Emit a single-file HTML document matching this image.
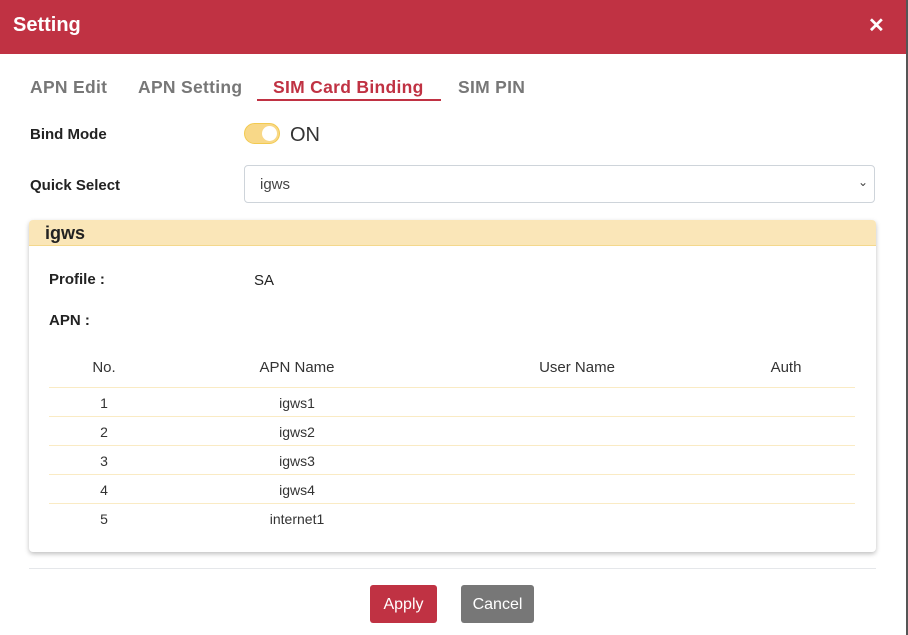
<!DOCTYPE html>
<html><head><style>
*{box-sizing:border-box;margin:0;padding:0}
body{width:908px;height:635px;background:#fff;font-family:"Liberation Sans",sans-serif;position:relative;overflow:hidden;color:#222}
.hdr{position:absolute;left:0;top:0;width:908px;height:54px;background:#c03243;color:#fff}
.hdr .t{position:absolute;left:13px;top:14px;font-size:20px;font-weight:bold}
.hdr .x{position:absolute;left:868px;top:13px;font-size:20px;font-weight:bold}
.tab{position:absolute;top:77px;font-size:17.5px;color:#777;font-weight:bold;letter-spacing:0.3px}
.lbl{position:absolute;left:30px;font-size:15px;font-weight:bold;color:#222}
.tog{position:absolute;left:244px;top:123px;width:36px;height:21px;border-radius:11px;background:#f8d888;border:1px solid #f2ca50}
.tog::after{content:"";position:absolute;right:2px;top:2px;width:15px;height:15px;border-radius:50%;background:#fff}
.sel{position:absolute;left:244px;top:165px;width:631px;height:38px;border:1px solid #ced4da;border-radius:4px;font-size:15px;color:#444;padding:10px 0 0 15px}
.card{position:absolute;left:29px;top:220px;width:847px;height:332px;border-radius:4px;box-shadow:0 2px 5px rgba(0,0,0,.25);background:#fff;overflow:hidden}
.ch{height:26px;background:#fae6b8;border-bottom:1px solid #f4d88c;font-size:18px;font-weight:bold;padding:3px 0 0 16px}
.c{position:absolute;font-size:14px;color:#333;transform:translateX(-50%);white-space:nowrap}
.ln{position:absolute;left:20px;width:806px;height:1px;background:#faebc4}
.btn{position:absolute;top:585px;height:38px;border-radius:3px;color:#fff;font-size:16px;text-align:center;padding-top:11px}
</style></head><body>
<div class="hdr"><div class="t">Setting</div><div class="x">✕</div></div>
<div class="tab" style="left:30px">APN Edit</div>
<div class="tab" style="left:138px">APN Setting</div>
<div class="tab" style="left:273px;color:#c03243">SIM Card Binding</div>
<div style="position:absolute;left:257px;top:99px;width:184px;height:2px;background:#c03243"></div>
<div class="tab" style="left:458px">SIM PIN</div>
<div class="lbl" style="top:126px">Bind Mode</div>
<div class="tog"></div>
<div style="position:absolute;left:290px;top:124px;font-size:20px;color:#333">ON</div>
<div class="lbl" style="top:177px">Quick Select</div>
<div class="sel">igws<span style="position:absolute;right:6px;top:9px;font-size:12px">&#8964;</span></div>
<div class="card">
<div class="ch">igws</div>
<div style="position:absolute;left:20px;top:51px;font-size:15px;font-weight:bold">Profile :</div>
<div style="position:absolute;left:225px;top:52px;font-size:15px">SA</div>
<div style="position:absolute;left:20px;top:92px;font-size:15px;font-weight:bold">APN :</div>
<div class="c" style="left:75px;top:139px;font-size:15px">No.</div>
<div class="c" style="left:268px;top:139px;font-size:15px">APN Name</div>
<div class="c" style="left:548px;top:139px;font-size:15px">User Name</div>
<div class="c" style="left:757px;top:139px;font-size:15px">Auth</div>
<div class="ln" style="top:167px"></div>
<div class="c" style="left:75px;top:175px">1</div><div class="c" style="left:268px;top:175px">igws1</div>
<div class="ln" style="top:196px"></div>
<div class="c" style="left:75px;top:204px">2</div><div class="c" style="left:268px;top:204px">igws2</div>
<div class="ln" style="top:225px"></div>
<div class="c" style="left:75px;top:233px">3</div><div class="c" style="left:268px;top:233px">igws3</div>
<div class="ln" style="top:254px"></div>
<div class="c" style="left:75px;top:262px">4</div><div class="c" style="left:268px;top:262px">igws4</div>
<div class="ln" style="top:283px"></div>
<div class="c" style="left:75px;top:291px">5</div><div class="c" style="left:268px;top:291px">internet1</div>
</div>
<div style="position:absolute;left:29px;top:568px;width:847px;height:1px;background:#e5e7ea"></div>
<div class="btn" style="left:370px;width:67px;background:#c03243">Apply</div>
<div class="btn" style="left:461px;width:73px;background:#777">Cancel</div>
<div style="position:absolute;left:906px;top:0;width:2px;height:635px;background:#555"></div>
</body></html>
